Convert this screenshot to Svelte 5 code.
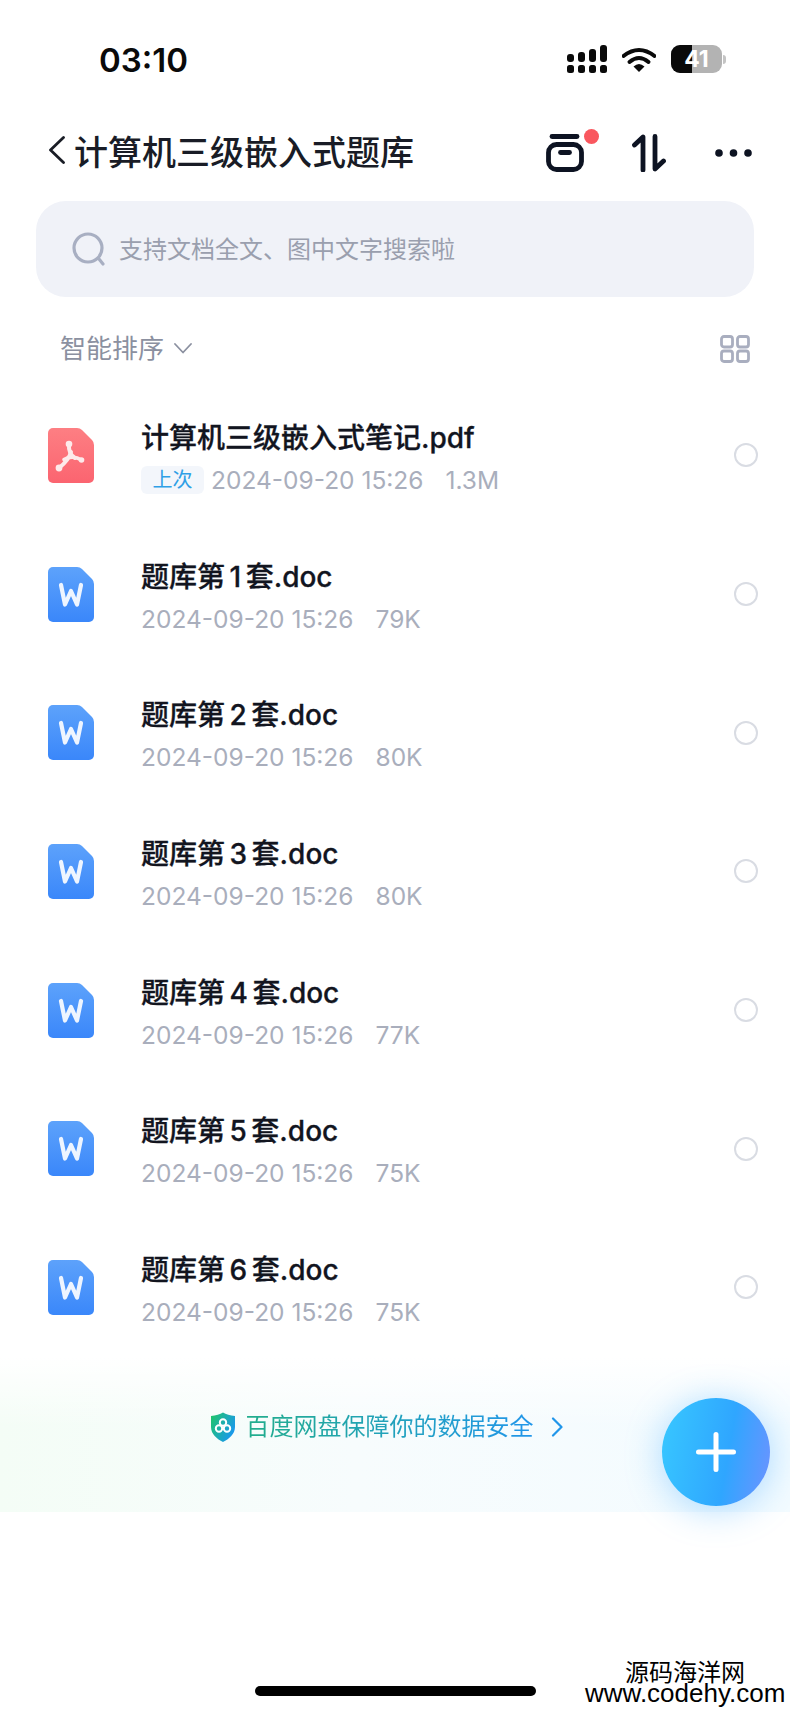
<script>
	const files = [
		{ name: '计算机三级嵌入式笔记', ext: '.pdf', size: '1.3M', type: 'pdf', last: true },
		{ name: '题库第', num: '1', tail: '套', ext: '.doc', size: '79K', type: 'doc' },
		{ name: '题库第', num: '2', tail: '套', ext: '.doc', size: '80K', type: 'doc' },
		{ name: '题库第', num: '3', tail: '套', ext: '.doc', size: '80K', type: 'doc' },
		{ name: '题库第', num: '4', tail: '套', ext: '.doc', size: '77K', type: 'doc' },
		{ name: '题库第', num: '5', tail: '套', ext: '.doc', size: '75K', type: 'doc' },
		{ name: '题库第', num: '6', tail: '套', ext: '.doc', size: '75K', type: 'doc' }
	];

	// same sheet outline for both file types
	const sheet = 'M5 0 H29 Q32 0 34 2 L44 12 Q46 14 46 17 V50 A5 5 0 0 1 41 55 H5 A5 5 0 0 1 0 50 V5 A5 5 0 0 1 5 0 Z';
</script>

<div class="page">
	<header class="status">
		<span class="time">03:10</span>
		<div class="status-icons">
			<svg width="40" height="28" viewBox="0 0 40 28" fill="#0a0a0a">
				<rect x="0" y="9" width="7" height="8" rx="3" />
				<rect x="0" y="20" width="7" height="8" rx="2.5" />
				<rect x="11" y="7" width="7" height="10" rx="3" />
				<rect x="11" y="20" width="7" height="8" rx="2.5" />
				<rect x="22" y="4" width="7" height="13" rx="3" />
				<rect x="22" y="20" width="7" height="8" rx="2.5" />
				<rect x="33" y="0" width="7" height="17" rx="3" />
				<rect x="33" y="20" width="7" height="8" rx="2.5" />
			</svg>
			<svg class="wifi" width="34" height="25" viewBox="0 0 34 25">
				<path d="M1.5 9 Q17 -3 32.500 9" fill="none" stroke="#0a0a0a" stroke-width="4" stroke-linecap="round" />
				<path d="M7.500 15 Q17 7 26.500 15" fill="none" stroke="#0a0a0a" stroke-width="4" stroke-linecap="round" />
				<path d="M11.500 19.500 Q17 14.500 22.500 19.500 L17 25 Z" fill="#0a0a0a" />
			</svg>
			<div class="battery">
				<span class="level"></span>
				<span class="pct">41</span>
			</div>
			<span class="nub"></span>
		</div>
	</header>

	<nav class="nav">
		<svg class="back" width="18" height="28" viewBox="0 0 18 28" fill="none">
			<path d="M15.500 1.500 L2.500 14 L15.500 26.500" stroke="#1a1d26" stroke-width="2.800" stroke-linecap="round" stroke-linejoin="round" />
		</svg>
		<h1>计算机三级嵌入式题库</h1>
		<div class="nav-actions">
			<div class="box-icon">
				<svg width="38" height="38" viewBox="0 0 38 38" fill="none" stroke="#0d1322" stroke-linecap="round">
					<path d="M6 2.500 H31" stroke-width="4.800" />
					<rect x="2.500" y="10.500" width="33" height="25" rx="8" stroke-width="4.800" />
					<path d="M14.500 18.500 H23.500" stroke-width="4.800" />
				</svg>
				<span class="dot"></span>
			</div>
			<svg class="sort" width="34" height="38" viewBox="0 0 34 38" fill="none" stroke="#0d1322" stroke-width="4.800" stroke-linecap="round" stroke-linejoin="round">
				<path d="M2.500 11 L11 3 V36" />
				<path d="M23 2.500 V35 L31.500 27" />
			</svg>
			<svg class="more" width="37" height="8" viewBox="0 0 37 8" fill="#0d1322">
				<circle cx="4" cy="4" r="3.800" />
				<circle cx="18.500" cy="4" r="3.800" />
				<circle cx="33" cy="4" r="3.800" />
			</svg>
		</div>
	</nav>

	<div class="search">
		<svg width="34" height="34" viewBox="0 0 34 34" fill="none" stroke="#a8afc2" stroke-width="3.200" stroke-linecap="round">
			<circle cx="16" cy="16" r="14" />
			<path d="M27 27 L31 32" />
		</svg>
		<span class="placeholder">支持文档全文、图中文字搜索啦</span>
	</div>

	<div class="sortbar">
		<span class="sort-label">智能排序</span>
		<svg class="caret" width="18" height="11" viewBox="0 0 18 11" fill="none">
			<path d="M1 1 L9 9.500 L17 1" stroke="#8b90a0" stroke-width="1.800" stroke-linecap="round" stroke-linejoin="round" />
		</svg>
		<svg class="grid" width="30" height="28" viewBox="0 0 30 28" fill="none" stroke="#a9aebf" stroke-width="2.800">
			<rect x="1.500" y="1.500" width="11" height="10.500" rx="2.500" />
			<rect x="17.500" y="1.500" width="11" height="10.500" rx="2.500" />
			<rect x="1.500" y="16" width="11" height="10.500" rx="2.500" />
			<rect x="17.500" y="16" width="11" height="10.500" rx="2.500" />
		</svg>
	</div>

	<ul class="files">
		{#each files as file}
			<li class="file">
				{#if file.type === 'pdf'}
					<svg class="file-icon" width="46" height="55" viewBox="0 0 46 55">
						<defs>
							<linearGradient id="pdfBg" x1="0" y1="0" x2="0" y2="1">
								<stop offset="0" stop-color="#fd7f83" />
								<stop offset="1" stop-color="#fb6470" />
							</linearGradient>
						</defs>
						<path d={sheet} fill="url(#pdfBg)" />
						<g fill="none" stroke="#fdeaea" stroke-linecap="round">
							<path d="M21 16 C20.500 22 22 27 27 30" stroke-width="4" />
							<path d="M23 24 C21 31 16 36 11 40" stroke-width="4" />
							<path d="M16 31.500 C21 28.500 28 28.500 33.500 32" stroke-width="3.600" />
						</g>
						<g fill="#fdeaea">
							<circle cx="21" cy="16" r="3.300" />
							<circle cx="11" cy="40" r="3.400" />
							<circle cx="33.500" cy="32" r="2.800" />
						</g>
					</svg>
				{:else}
					<svg class="file-icon" width="46" height="55" viewBox="0 0 46 55">
						<defs>
							<linearGradient id="docBg" x1="0" y1="0" x2="0" y2="1">
								<stop offset="0" stop-color="#5da2fb" />
								<stop offset="1" stop-color="#3a87fa" />
							</linearGradient>
						</defs>
						<path d={sheet} fill="url(#docBg)" />
						<path d="M13 18 L17 37.500 L23 24 L29 37.500 L33 18" fill="none" stroke="#eef5ff" stroke-width="4.200" stroke-linecap="round" stroke-linejoin="round" />
					</svg>
				{/if}
				<div class="file-body">
					<div class="file-name">{file.name}{#if file.num}<span class="num">{file.num}</span>{file.tail}{/if}{file.ext}</div>
					<div class="file-meta">
						{#if file.last}<span class="tag">上次</span>{/if}
						<span>2024-09-20 15:26</span>
						<span class="size">{file.size}</span>
					</div>
				</div>
				<span class="radio"></span>
			</li>
		{/each}
	</ul>

	<div class="banner">
		<div class="banner-link">
			<svg width="26" height="30" viewBox="0 0 26 30">
				<defs>
					<linearGradient id="shield" x1="0" y1="0" x2="1" y2="0.600">
						<stop offset="0" stop-color="#20c765" />
						<stop offset="1" stop-color="#1a98ee" />
					</linearGradient>
				</defs>
				<path d="M13 0.500 C16 2.500 20 3.500 25 4 V15 C25 22 19 27 13 30 C7 27 1 22 1 15 V4 C6 3.500 10 2.500 13 0.500 Z" fill="url(#shield)" />
				<g fill="none" stroke="#fff" stroke-width="2">
					<circle cx="13" cy="10.500" r="3.200" />
					<circle cx="9" cy="16.500" r="3.200" />
					<circle cx="17" cy="16.500" r="3.200" />
				</g>
			</svg>
			<span class="banner-text">百度网盘保障你的数据安全</span>
			<svg class="banner-arrow" width="12" height="20" viewBox="0 0 12 20" fill="none">
				<path d="M2 1.500 L10.500 10 L2 18.500" stroke="#2196ea" stroke-width="2.200" stroke-linecap="round" stroke-linejoin="round" />
			</svg>
		</div>
	</div>

	<button class="fab" aria-label="add">
		<svg width="40" height="40" viewBox="0 0 40 40" stroke="#fff" stroke-width="5" stroke-linecap="round">
			<path d="M20 2.500 V37.500 M2.500 20 H37.500" />
		</svg>
	</button>

	<div class="home-bar"></div>
	<div class="watermark">
		<div>源码海洋网</div>
		<div class="site">www.codehy.com</div>
	</div>
</div>

<style>
	:global(body) {
		margin: 0;
		background: #fff;
	}

	.page {
		position: relative;
		width: 790px;
		height: 1712px;
		overflow: hidden;
		background: #fff;
		font-family: Inter, 'Noto Sans CJK SC', sans-serif;
		color: #12151f;
	}

	.status {
		height: 118px;
		box-sizing: border-box;
		padding: 41px 64px 0 99px;
		display: flex;
		justify-content: space-between;
		align-items: flex-start;
	}

	.time {
		font-size: 33px;
		font-weight: 600;
		line-height: 38px;
		color: #0a0a0a;
	}

	.status-icons {
		display: flex;
		align-items: center;
		margin-top: 4px;
	}

	.wifi {
		margin-left: 15px;
	}

	.battery {
		position: relative;
		width: 51px;
		height: 28px;
		margin-left: 15px;
		border-radius: 9px;
		background: #b3b3b3;
		overflow: hidden;
	}

	.level {
		position: absolute;
		left: 0;
		top: 0;
		bottom: 0;
		width: 21px;
		background: #0a0a0a;
	}

	.pct {
		position: absolute;
		inset: 0;
		text-align: center;
		font-size: 23px;
		font-weight: 700;
		line-height: 28px;
		color: #fff;
	}

	.nub {
		width: 3px;
		height: 9px;
		margin-left: 1px;
		background: #c4c4c4;
		border-radius: 0 3px 3px 0;
	}

	.nav {
		height: 70px;
		margin-bottom: 13px;
		box-sizing: border-box;
		padding: 0 38px 0 48px;
		display: flex;
		align-items: center;
	}

	.back {
		margin-top: -7px;
	}

	h1 {
		margin: 0 0 0 8px;
		font-size: 34px;
		font-weight: 500;
		line-height: 44px;
		color: #191c26;
	}

	.nav-actions {
		margin-left: auto;
		display: flex;
		align-items: center;
	}

	.box-icon {
		position: relative;
		width: 38px;
		height: 38px;
	}

	.box-icon svg {
		display: block;
	}

	.dot {
		position: absolute;
		left: 38px;
		top: -5px;
		width: 15px;
		height: 15px;
		border-radius: 50%;
		background: #f9575e;
	}

	.sort {
		margin-left: 48px;
	}

	.more {
		margin-left: 49px;
	}

	.search {
		margin: 0 36px;
		height: 96px;
		box-sizing: border-box;
		padding-left: 36px;
		display: flex;
		align-items: center;
		gap: 13px;
		background: #f0f2f8;
		border-radius: 30px;
		font-size: 24px;
		color: #9a9fae;
	}

	.placeholder {
		margin-bottom: 3px;
	}

	.sortbar {
		height: 89px;
		box-sizing: border-box;
		padding: 14px 40px 0 60px;
		display: flex;
		align-items: center;
	}

	.sort-label {
		margin-bottom: 4px;
		font-size: 26px;
		color: #8b90a0;
	}

	.caret {
		margin-left: 10px;
	}

	.grid {
		margin-left: auto;
	}

	.files {
		list-style: none;
		margin: 0;
		padding: 0;
	}

	.file {
		height: 138.700px;
		box-sizing: border-box;
		padding: 0 32px 0 48px;
		display: flex;
		align-items: center;
	}

	.file-icon {
		flex: none;
	}

	.file-body {
		margin-left: 47px;
		padding-top: 5px;
		flex: 1;
	}

	.file-name {
		font-size: 28px;
		font-weight: 500;
		line-height: 41px;
		-webkit-text-stroke: 0.3px #12151f;
		color: #12151f;
	}

	.num {
		margin: 0 4.500px;
	}

	.file-meta {
		margin-top: 3px;
		display: flex;
		align-items: center;
		font-size: 24.500px;
		line-height: 36px;
		color: #a9aebc;
	}

	.tag {
		width: 63px;
		height: 28px;
		margin-right: 7px;
		border-radius: 6px;
		background: #f3f6fb;
		color: #2f9fe6;
		font-size: 20px;
		line-height: 28px;
		text-align: center;
	}

	.size {
		margin-left: 22px;
	}

	.radio {
		flex: none;
		width: 24px;
		height: 24px;
		box-sizing: border-box;
		border: 2.500px solid #d9dce3;
		border-radius: 50%;
	}

	.banner {
		height: 155px;
		box-sizing: border-box;
		padding: 55px 18px 0 0;
		background:
			linear-gradient(180deg, #fff 0%, rgba(255, 255, 255, 0) 45%),
			linear-gradient(90deg, #f4fdf6 0%, #f7fcfd 45%, #f3fbff 100%);
		display: flex;
		justify-content: center;
		align-items: flex-start;
	}

	.banner-link {
		display: flex;
		align-items: center;
	}

	.banner-text {
		margin-left: 10px;
		font-size: 24px;
		line-height: 30px;
		background: linear-gradient(90deg, #22ad8c, #2196ea);
		-webkit-background-clip: text;
		background-clip: text;
		color: transparent;
	}

	.banner-arrow {
		margin-left: 17px;
	}

	.fab {
		position: absolute;
		left: 662px;
		top: 1398px;
		width: 108px;
		height: 108px;
		padding: 0;
		border: none;
		border-radius: 50%;
		background: linear-gradient(100deg, #38c8ff 0%, #2fa6ff 60%, #6f92ff 100%);
		box-shadow: 0 4px 36px rgba(60, 170, 255, 0.4);
		display: flex;
		align-items: center;
		justify-content: center;
	}

	.home-bar {
		position: absolute;
		left: 255px;
		top: 1686px;
		width: 281px;
		height: 10px;
		border-radius: 5px;
		background: #000;
	}

	.watermark {
		position: absolute;
		right: 5px;
		top: 1662px;
		width: 200px;
		text-align: center;
		font-family: 'Liberation Sans', 'Noto Sans CJK SC', sans-serif;
		font-size: 24px;
		line-height: 21px;
		white-space: nowrap;
		color: #000;
	}

	.site {
		font-size: 26px;
	}
</style>
